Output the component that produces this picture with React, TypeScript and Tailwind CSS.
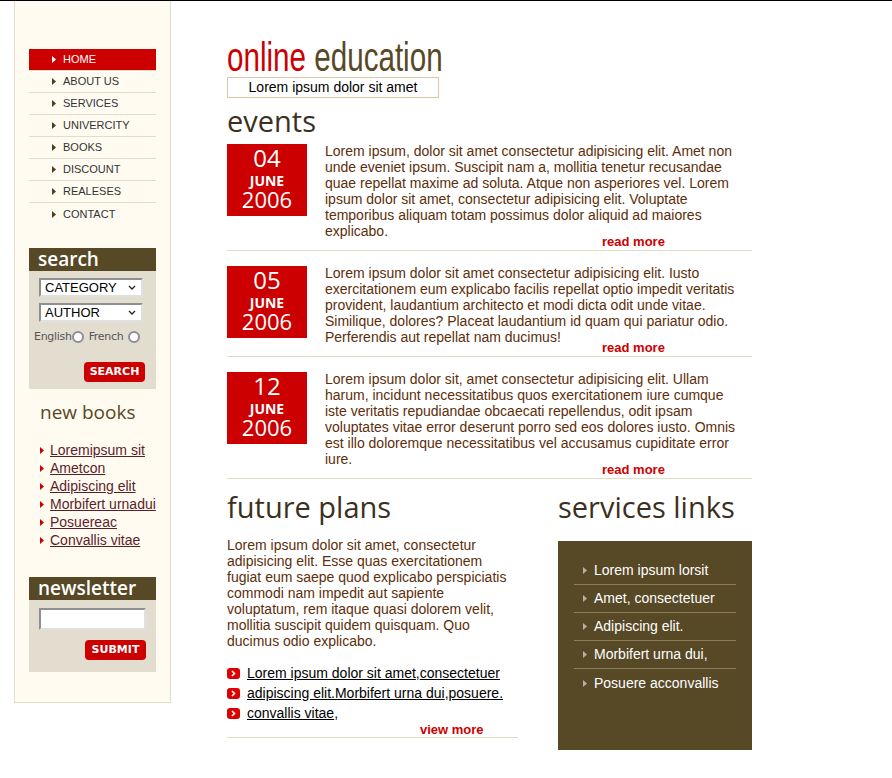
import React from 'react';

const navItems = ['HOME', 'ABOUT US', 'SERVICES', 'UNIVERCITY', 'BOOKS', 'DISCOUNT', 'REALESES', 'CONTACT'];

const newBooks = ['Loremipsum sit', 'Ametcon', 'Adipiscing elit', 'Morbifert urnadui', 'Posuereac', 'Convallis vitae'];

const events = [
  {
    day: '04',
    text: 'Lorem ipsum, dolor sit amet consectetur adipisicing elit. Amet non unde eveniet ipsum. Suscipit nam a, mollitia tenetur recusandae quae repellat maxime ad soluta. Atque non asperiores vel. Lorem ipsum dolor sit amet, consectetur adipisicing elit. Voluptate temporibus aliquam totam possimus dolor aliquid ad maiores explicabo.',
  },
  {
    day: '05',
    text: 'Lorem ipsum dolor sit amet consectetur adipisicing elit. Iusto exercitationem eum explicabo facilis repellat optio impedit veritatis provident, laudantium architecto et modi dicta odit unde vitae. Similique, dolores? Placeat laudantium id quam qui pariatur odio. Perferendis aut repellat nam ducimus!',
  },
  {
    day: '12',
    text: 'Lorem ipsum dolor sit, amet consectetur adipisicing elit. Ullam harum, incidunt necessitatibus quos exercitationem iure cumque iste veritatis repudiandae obcaecati repellendus, odit ipsam voluptates vitae error deserunt porro sed eos dolores iusto. Omnis est illo doloremque necessitatibus vel accusamus cupiditate error iure.',
  },
];

const planLinks = [
  <><span className="underline">Lorem ipsum dolor sit amet</span>,<span className="underline">consectetuer</span></>,
  <><span className="underline">adipiscing elit.Morbifert urna dui</span>,<span className="underline">posuere.</span></>,
  <><span className="underline">convallis vitae</span>,</>,
];

const serviceLinks = ['Lorem ipsum lorsit', 'Amet, consectetuer', 'Adipiscing elit.', 'Morbifert urna dui,', 'Posuere acconvallis'];

const Tri = ({ className }: { className: string }) => (
  <svg width="4" height="7" viewBox="0 0 4 7" className={`shrink-0 ${className}`}>
    <path d="M0 0 L4 3.5 L0 7 Z" fill="currentColor" />
  </svg>
);

const Select = ({ label }: { label: string }) => (
  <div className="flex h-[19px] w-[104px] items-center justify-between border-2 border-t-[#8f8f8f] border-l-[#8f8f8f] border-r-[#e0e0e0] border-b-[#e0e0e0] bg-white pl-[4px] pr-[5px] text-[13px] leading-none text-black">
    <span>{label}</span>
    <svg width="8" height="5" viewBox="0 0 8 5">
      <path d="M1 1 L4 4 L7 1" stroke="#222" strokeWidth="1.3" fill="none" />
    </svg>
  </div>
);

const Radio = () => <span className="inline-block h-[12px] w-[12px] rounded-full border-2 border-[#8d8d9a] bg-white" />;

const BoxHeader = ({ title }: { title: string }) => (
  <div className="h-[23px] bg-[#574826] pl-[9px] font-['Open_Sans',sans-serif] text-[19px] leading-[22px] font-semibold text-white">
    {title}
  </div>
);

export default function App() {
  return (
    <div className="min-h-[778px] border-t border-black bg-white font-['Liberation_Sans',Arial,sans-serif]">
      <div className="flex items-start">
        {/* Sidebar */}
        <aside className="ml-[14px] h-[702px] w-[157px] shrink-0 border border-t-0 border-[#e2dccb] bg-[#fffbf1] px-[14px] pt-[48px]">
          <ul>
            {navItems.map((item, i) => (
              <li
                key={item}
                className={`flex h-[22px] items-center gap-[7px] pl-[23px] text-[11px] ${
                  i === 0 ? 'bg-[#cc0000] text-white' : 'text-[#333]'
                } ${i < navItems.length - 1 ? 'border-b border-[#e2dccb]' : ''}`}
              >
                <Tri className={i === 0 ? 'text-white' : 'text-[#4a3d22]'} />
                {item}
              </li>
            ))}
          </ul>

          <div className="mt-[23px] bg-[#e3ddcf]">
            <BoxHeader title="search" />
            <div className="flex flex-col px-[10px] pt-[7px] pb-[7px]">
              <Select label="CATEGORY" />
              <div className="mt-[6px]">
                <Select label="AUTHOR" />
              </div>
              <div className="mt-[9px] -ml-[5px] flex h-[12px] items-center font-['DejaVu_Sans',sans-serif] text-[11px] text-[#555]">
                <span className="tracking-[-0.3px]">English</span>
                <Radio />
                <span className="ml-[5px] tracking-[-0.3px]">French</span>
                <span className="ml-[5px] flex">
                  <Radio />
                </span>
              </div>
              <div className="mt-[19px] flex justify-end pr-[1px]">
                <button className="h-[20px] w-[61px] rounded-[4px] bg-[#cc0000] font-['DejaVu_Sans',sans-serif] text-[11px] font-bold text-white">
                  SEARCH
                </button>
              </div>
            </div>
          </div>

          <h3 className="mt-[11px] pl-[11px] font-['Open_Sans',sans-serif] text-[19px] leading-[24px] text-[#574826]">new books</h3>

          <ul className="mt-[17px] pl-[11px]">
            {newBooks.map((b) => (
              <li key={b} className="flex h-[18px] items-center gap-[6px] whitespace-nowrap text-[14px] text-[#5b1e2b]">
                <Tri className="text-[#cc0000]" />
                <span className="underline">{b}</span>
              </li>
            ))}
          </ul>

          <div className="mt-[28px] bg-[#e3ddcf]">
            <BoxHeader title="newsletter" />
            <div className="px-[10px] pt-[8px] pb-[12px]">
              <div className="h-[22px] w-[107px] border-2 border-t-[#8f8f8f] border-l-[#8f8f8f] border-r-[#e0e0e0] border-b-[#e0e0e0] bg-white" />
              <div className="mt-[10px] flex justify-end">
                <button className="h-[20px] w-[61px] rounded-[4px] bg-[#cc0000] font-['DejaVu_Sans',sans-serif] text-[11px] font-bold text-white">
                  SUBMIT
                </button>
              </div>
            </div>
          </div>
        </aside>

        {/* Main */}
        <main className="ml-[56px] w-[525px] pt-[36px]">
          <h1 className="origin-left scale-x-[0.74] whitespace-nowrap text-[40px] leading-[40px] font-['Liberation_Sans_Narrow','Liberation_Sans',sans-serif]">
            <span className="text-[#cc0000]">online</span> <span className="text-[#574826]">education</span>
          </h1>
          <div className="h-[21px] w-[212px] border border-[#d6c9a3] text-center text-[14px] leading-[19px] text-black">
            Lorem ipsum dolor sit amet
          </div>

          <h2 className="mt-[4px] font-['Open_Sans',sans-serif] text-[29px] leading-[38px] text-[#3b3020]">events</h2>

          <div className="mt-[4px]">
            {events.map((ev, i) => (
              <div key={ev.day} className={i > 0 ? 'mt-[15px]' : ''}>
                <div className="flex gap-[18px]">
                  <div className="flex h-[72px] w-[80px] shrink-0 flex-col items-center bg-[#cc0000] pt-[2px] font-['Open_Sans',sans-serif] text-white">
                    <span className="text-[24px] leading-[24px]">{ev.day}</span>
                    <span className="mt-[4px] text-[14px] leading-[14px] font-bold">JUNE</span>
                    <span className="text-[22px] leading-[22px]">2006</span>
                  </div>
                  <p className="-mt-[1px] w-[418px] text-[14px] leading-[16px] text-[#5c2e0a]">{ev.text}</p>
                </div>
                <div className="-mt-[4px] h-[16px] border-b border-[#e3dcc5] pl-[375px] text-[13px] leading-[14px] font-bold text-[#cc0000]">
                  read more
                </div>
              </div>
            ))}
          </div>

          <div className="mt-[9px] flex gap-[40px]">
            <div className="w-[291px]">
              <h2 className="font-['Open_Sans',sans-serif] text-[29px] leading-[38px] text-[#3b3020]">future plans</h2>
              <p className="mt-[11px] text-[14px] leading-[16px] text-[#5c2e0a]">
                Lorem ipsum dolor sit amet, consectetur adipisicing elit. Esse quas exercitationem fugiat eum saepe quod explicabo perspiciatis commodi nam impedit aut sapiente voluptatum, rem itaque quasi dolorem velit, mollitia suscipit quidem quisquam. Quo ducimus odio explicabo.
              </p>
              <ul className="mt-[14px]">
                {planLinks.map((l, i) => (
                  <li key={i} className="flex h-[20px] items-center gap-[7px] text-[14px] text-black">
                    <span className="flex h-[11px] w-[13px] items-center justify-center rounded-[3px] bg-[#dd0000]">
                      <svg width="5" height="7" viewBox="0 0 5 7">
                        <path d="M1 1 L3.5 3.5 L1 6" stroke="#fff" strokeWidth="1.6" fill="none" />
                      </svg>
                    </span>
                    <span>{l}</span>
                  </li>
                ))}
              </ul>
              <div className="h-[15px] border-b border-[#e3dcc5] pl-[193px] text-[13px] leading-[13px] font-bold text-[#cc0000]">
                view more
              </div>
            </div>

            <div className="w-[194px]">
              <h2 className="font-['Open_Sans',sans-serif] text-[29px] leading-[38px] text-[#3b3020]">services links</h2>
              <div className="mt-[15px] h-[209px] bg-[#574826] px-[16px] pt-[16px]">
                {serviceLinks.map((s, i) => (
                  <div
                    key={s}
                    className={`flex h-[28px] items-center gap-[7px] pl-[9px] text-[14px] text-white ${
                      i < serviceLinks.length - 1 ? 'border-b border-[#8c7c5a]' : ''
                    }`}
                  >
                    <Tri className="text-[#b8b0a0]" />
                    {s}
                  </div>
                ))}
              </div>
            </div>
          </div>
        </main>
      </div>
    </div>
  );
}
